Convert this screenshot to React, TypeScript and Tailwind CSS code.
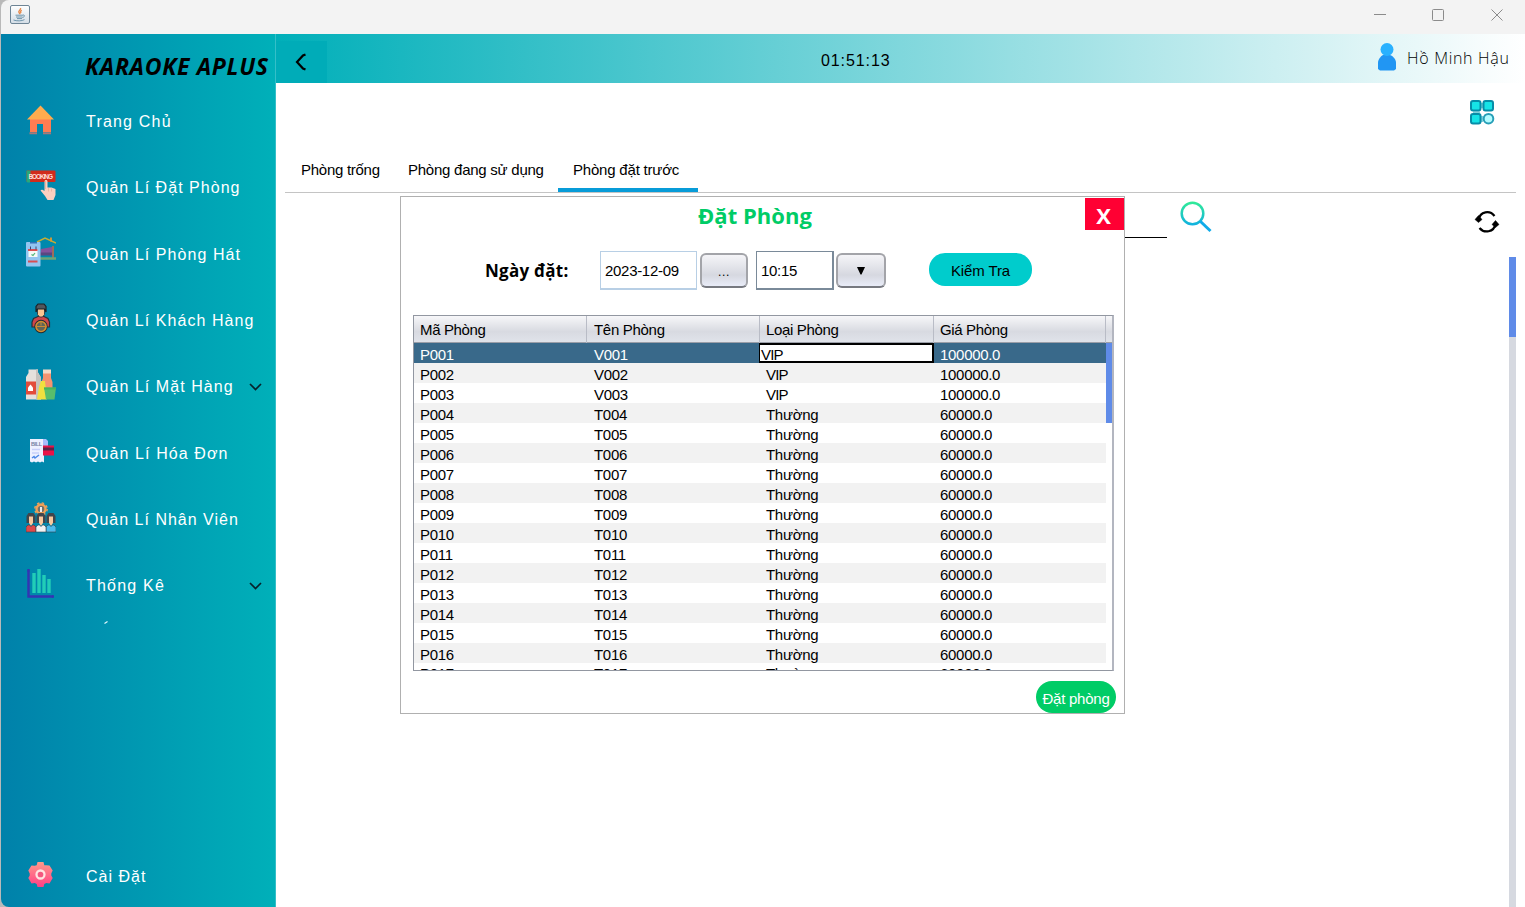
import React from "react";

const ARIAL = "font-['Liberation_Sans',Arial,sans-serif]";

function JavaIcon() {
  return (
    <svg width="20" height="20" viewBox="0 0 20 20">
      <defs>
        <linearGradient id="jv" x1="0" y1="0" x2="0" y2="1">
          <stop offset="0" stopColor="#ffffff" />
          <stop offset="1" stopColor="#d3dde6" />
        </linearGradient>
      </defs>
      <rect x="0.5" y="0.5" width="19" height="18" rx="1.5" fill="url(#jv)" stroke="#6e8596" />
      <path d="M10.500 3c1 1.600-2.500 2.600-1.600 4.200.3.800 1 1.200 1 2M11.800 5.400c-1.600.7-1.600 1.600-.7 2.600" fill="none" stroke="#e8894a" strokeWidth="1.400" />
      <path d="M5.500 10.200h7.500M6 12h6.500M7 13.600h5M13 10c2.200-.2 1.800 2-.6 2.600M3.500 15c3 1.200 8.500 1.200 11-.4" fill="none" stroke="#6f95ac" strokeWidth="1" />
    </svg>
  );
}

function HomeIcon() {
  return (
    <svg width="30" height="30" viewBox="1 0 30 30">
      <path d="M5 13h21v14h-8v-8h-6v8H5z" fill="#ff7c52" />
      <path d="M4.500 27.300H12v2H4.500zM18 27.300h8v2h-8z" fill="#a87878" />
      <path d="M15.500 0.500L29 14.500H2z" fill="#ffac4e" />
    </svg>
  );
}

function BookingIcon() {
  return (
    <svg width="30" height="31" viewBox="0 0 30 31">
      <rect x="0.500" y="0.500" width="29" height="11.500" rx="1" fill="#d12b1c" />
      <path d="M.5 0.500h4v3l-.5 9H1.500l-1-1z" fill="#28a87a" />
      <text x="2.500" y="8.600" fontSize="6.500" fontWeight="700" fill="#ffdcd6" textLength="24.500" fontFamily="Liberation Sans">BOOKING</text>
      <path d="M20 10c1 0 1.500.6 1.500 1.800v5.700h4l4 1.500v6l-2 5h-6l-2.500-4-4.500-5.500c1-1.500 2.500-.8 4 .5v-9.200c0-1.200.5-1.800 1.500-1.800z" fill="#fbcfc0" />
      <path d="M19.500 11v8M22.500 18v3.500M25.500 18.500v3" stroke="#e5a995" strokeWidth=".7" />
    </svg>
  );
}

function RoomIcon() {
  return (
    <svg width="30" height="31" viewBox="0 0 30 31">
      <path d="M15 12l11-2v8H14z" fill="#85529c" />
      <path d="M14 15.500h12V18.500H14z" fill="#594780" />
      <path d="M27 9v12" stroke="#b06a52" strokeWidth="1.800" />
      <path d="M11 5L19 1l11 5" fill="none" stroke="#c3ad37" strokeWidth="1.500" />
      <path d="M25 .5v4" stroke="#e49a2e" strokeWidth="1.800" />
      <path d="M14 21.500h16" stroke="#6da477" strokeWidth="2.500" />
      <rect x="0" y="5" width="14.500" height="24.500" rx="1" fill="#93c5f0" />
      <path d="M4 5h7v1.500H4z" fill="#3275b8" />
      <rect x="2.500" y="12" width="9" height="8" fill="#f5faf7" />
      <path d="M2 13h9.500M2 24.500h9.500" stroke="#d94e52" strokeWidth="2" />
      <path d="M4.500 9.500v3M10 9.500v3" stroke="#3c4773" />
      <path d="M5.500 17.500l1.500 1 2-2.500" stroke="#50b577" fill="none" strokeWidth="1.200" />
    </svg>
  );
}

function CustomerIcon() {
  return (
    <svg width="30" height="31" viewBox="0 0 30 31">
      <path d="M6 24v-5l1.500-3.500 4.500-2h6l4 2 1.500 3.500v5z" fill="#cf464a" stroke="#263038" strokeWidth="1.200" />
      <path d="M11.500 5.500h7v6l-2 2.500h-3l-2-2.500z" fill="#f9c591" stroke="#212b32" strokeWidth=".8" />
      <path d="M10 9V3.500l2-2.500h6l2 2.500V9l-1.500-3h-7z" fill="#52565d" stroke="#1b2025" strokeWidth="1.200" />
      <circle cx="15" cy="23.500" r="5" fill="none" stroke="#212b32" strokeWidth="3.400" />
      <circle cx="15" cy="23.500" r="5" fill="#5e6558" stroke="#d58e2f" strokeWidth="1.600" />
      <path d="M9.500 23.500h11M15 18.500v4" stroke="#c98a35" strokeWidth="1" />
    </svg>
  );
}

function GoodsIcon() {
  return (
    <svg width="30" height="31" viewBox="0 0 30 31">
      <path d="M17 4h8v5l1.500 4v8h-11v-8l1.500-4z" fill="#f69370" />
      <path d="M17 .5h8v4h-8z" fill="#f6d9c7" />
      <path d="M0 8l2.500-4V.5H12v3l3 5v22H0z" fill="#e6e0dc" />
      <path d="M10 .5h2v3l3 5v22h-5z" fill="#c7c1bd" />
      <path d="M0 12.500h10v13H0z" fill="#e34c3b" />
      <path d="M4.500 15.500l2.500 3v3.500H2v-3.500z" fill="#fff" />
      <path d="M15 12h4l2 18.500H11L13 18z" fill="#f1e03f" />
      <path d="M18 18.500h12l-1.500 12H20z" fill="#59bd6c" />
      <path d="M18 18.500h12v2H18z" fill="#48b35c" />
    </svg>
  );
}

function BillIcon() {
  return (
    <svg width="30" height="26" viewBox="0 0 30 26">
      <path d="M4 1h14v23.500l-2-1-2 1-2-1-2 1-2-1-2 1-2-1z" fill="#eef0ff" />
      <path d="M17 1h3l2 2v5h-5z" fill="#a7bdfc" />
      <text x="5" y="7.500" fontSize="5.500" fontWeight="700" fill="#78809f" fontFamily="Liberation Sans" textLength="11">BILL</text>
      <path d="M6 11.500h8M6 15h7" stroke="#c9cffa" strokeWidth="1.500" />
      <path d="M6 20l2-1.500 1 1.500 4-3" fill="none" stroke="#4d87e8" strokeWidth="1.500" />
      <rect x="17" y="7.500" width="11" height="10" fill="#e91247" />
      <path d="M17 9.500h11v3H17z" fill="#592548" />
    </svg>
  );
}

function Person({ x, hair, body }: { x: number; hair: string; body: string }) {
  return (
    <g transform={`translate(${x} 0)`}>
      <path d="M0 21v-7l2-3h5l2 3v7z" fill={hair} />
      <path d="M2.500 14.500h4v6.500l-2 3-2-3z" fill="#fac89d" />
      <path d="M-.5 30v-5l2-2h1.500l1.500 1.500L6 23h1.500l2 2v5z" fill={body} stroke="#30404b" strokeWidth=".6" />
    </g>
  );
}

function StaffIcon() {
  return (
    <svg width="30" height="31" viewBox="0 0 30 31">
      <circle cx="15" cy="7" r="4.500" fill="#6f716a" stroke="#f0a056" strokeWidth="2.400" />
      <circle cx="15" cy="7" r="6.200" fill="none" stroke="#eea05b" strokeWidth="1.400" strokeDasharray="2.430 2.440" />
      <path d="M14 5h2v5h-2z" fill="#e8edf0" />
      <Person x={0.5} hair="#41454b" body="#e04a4a" />
      <Person x={20.5} hair="#41454b" body="#4dbbed" />
      <Person x={10.5} hair="#41454b" body="#f2f2f2" />
    </svg>
  );
}

function ChartIcon() {
  return (
    <svg width="30" height="31" viewBox="0 0 30 31">
      <path d="M2.500 1v27.500H28" fill="none" stroke="#3434b3" strokeWidth="2.400" />
      <path d="M1 3h3M26.500 27v3" stroke="#3434b3" />
      <path d="M8 5v20M13 1v24M18 7v18M23 11v14" stroke="#21cdb7" strokeWidth="3.400" />
    </svg>
  );
}

function GearIcon() {
  return (
    <svg width="27" height="27" viewBox="0 0 27 27">
      <defs>
        <linearGradient id="gr" x1="0" y1="0" x2="0" y2="1">
          <stop offset="0" stopColor="#ff9a8a" />
          <stop offset="1" stopColor="#ff3f86" />
        </linearGradient>
      </defs>
      <path d="M11.500 1h6l.8 3.300h2l3.200.2 3.200 5-1.400 3v2l1.400 2.500-3.200 5.500-3.200-.5-2 1-.8 3h-6l-.8-3-2-1-3.200.5L2.300 17l1.400-2.500v-2l-1.400-3 3.200-5 3.200.2 2-.4z" fill="url(#gr)" />
      <circle cx="14.500" cy="13.500" r="4" fill="#f4577f" stroke="#ffe3e0" strokeWidth="2.300" />
    </svg>
  );
}

const Chevron = () => (
  <svg width="13" height="8" viewBox="0 0 13 8" className="mt-[2px]">
    <path d="M1 1l5.500 5.500L12 1" fill="none" stroke="#06222b" strokeWidth="1.700" />
  </svg>
);

const menu = [
  { label: "Trang Chủ", icon: <HomeIcon />, track: "tracking-[1.2px]" },
  { label: "Quản Lí Đặt Phòng", icon: <BookingIcon />, track: "tracking-[1.03px]" },
  { label: "Quản Lí Phòng Hát", icon: <RoomIcon />, track: "tracking-[1.06px]" },
  { label: "Quản Lí Khách Hàng", icon: <CustomerIcon />, track: "tracking-[1.05px]" },
  { label: "Quản Lí Mặt Hàng", icon: <GoodsIcon />, sub: true, track: "tracking-[1.06px]" },
  { label: "Quản Lí Hóa Đơn", icon: <BillIcon />, track: "tracking-[1.1px]" },
  { label: "Quản Lí Nhân Viên", icon: <StaffIcon />, track: "tracking-[1px]" },
  { label: "Thống Kê", icon: <ChartIcon />, sub: true, track: "tracking-[1.2px]" },
];

function Sidebar() {
  return (
    <aside className="flex w-[275px] shrink-0 flex-col overflow-hidden rounded-bl-lg border-r border-[#35bfc8] bg-linear-to-r/srgb from-[#0081aa] to-[#00b0b9] text-white">
      <div className="flex h-[54px] shrink-0 items-end pb-[7px] pl-[84px] font-['Open_Sans','Noto_Sans',sans-serif] text-[23px] leading-[30px] font-bold whitespace-nowrap text-black italic">
        <span className="tracking-[0.68px]">KARAOKE APLUS</span>
      </div>
      <nav className="flex flex-col">
        {menu.map((m) => (
          <div key={m.label} className="flex h-[66.3px] items-center pl-[25px]">
            <span className="-mt-[3px] flex w-[60px] shrink-0">{m.icon}</span>
            <span className={`w-[163px] pt-[2px] text-[16px] whitespace-nowrap ${m.track}`}>{m.label}</span>
            {m.sub && <Chevron />}
          </div>
        ))}
      </nav>
      <div className="ml-[102px] h-[5px] w-[10px] pt-px">
        <svg width="8" height="5" viewBox="0 0 8 5">
          <path d="M1.500 4.500L4.500 2.500" stroke="#e8fbff" strokeWidth="1.200" />
        </svg>
      </div>
      <div className="mt-auto mb-[16px] flex h-[32px] items-center pl-[25px]">
        <span className="-mt-px flex w-[60px] shrink-0">
          <GearIcon />
        </span>
        <span className="pt-[3px] text-[16px] tracking-[1px]">Cài Đặt</span>
      </div>
    </aside>
  );
}

const rooms = Array.from({ length: 17 }, (_, i) => {
  const n = String(i + 1).padStart(3, "0");
  const vip = i < 3;
  return { id: `P${n}`, name: `${vip ? "V" : "T"}${n}`, type: vip ? "VIP" : "Thường", price: vip ? "100000.0" : "60000.0" };
});

const COLS = "grid grid-cols-[173px_173px_174px_172px]";

function RoomTable() {
  return (
    <div className="mt-[25px] ml-[12px] flex h-[356px] w-[701px] flex-col overflow-hidden border border-r-2 border-[#9297a1] border-r-[#b3b6c0]">
      <div className="flex h-[27px] shrink-0 border-b border-[#9a9ea8] bg-linear-to-b from-[#f7f7f9] via-[#d8dae1] via-60% to-[#e0e3ea]">
        <div className={`${COLS} w-[692px] leading-[28px]`}>
          {["Mã Phòng", "Tên Phòng", "Loại Phòng", "Giá Phòng"].map((h, i) => (
            <div key={h} className={`border-r border-[#b9bcc6] ${i === 1 ? "pl-[7px] tracking-[-0.3px]" : "pl-[6px] tracking-[-0.35px]"}`}>
              {h}
            </div>
          ))}
        </div>
      </div>
      <div className="flex min-h-0 flex-1">
        <div className="w-[692px] overflow-hidden">
          {rooms.map((r, i) => (
            <div
              key={r.id}
              className={`${COLS} h-[20px] ${i === 16 ? "leading-[22px]" : "leading-[24px]"} ${i === 0 ? "bg-[#39698a] text-white" : i % 2 ? "bg-[#f2f2f2]" : "bg-white"}`}
            >
              <div className="pl-[6px]">{r.id}</div>
              <div className="pl-[7px]">{r.name}</div>
              {i === 0 ? (
                <div className="-ml-px h-[20px] border-2 border-l-1 border-black bg-white pl-px leading-[20px] tracking-[-0.8px] text-black">{r.type}</div>
              ) : (
                <div className={r.type === "VIP" ? "pl-[6px] tracking-[-0.8px]" : "pl-[6px]"}>{r.type}</div>
              )}
              <div className="pl-[6px]">{r.price}</div>
            </div>
          ))}
        </div>
        <div className="flex-1 bg-white">
          <div className="h-[80px] bg-[#5f8be8]" />
        </div>
      </div>
    </div>
  );
}

const metal =
  "flex h-[35px] items-center justify-center rounded-[6px] border-2 border-[#a3a4a9] border-b-[#777980] bg-linear-to-b from-[#f5f5f8] via-[#d6d8e0] via-65% to-[#e9ecf8]";

function BookingDialog() {
  return (
    <section className="absolute top-[196px] left-[400px] flex h-[518px] w-[725px] flex-col border border-[#b0b0b0] bg-white text-[15px] tracking-[-0.3px] text-black">
      <div className="flex h-[34px] shrink-0 justify-between pt-px">
        <h1 className="w-[684px] pl-[24px] text-center font-['Open_Sans','Noto_Sans',sans-serif] text-[22px] leading-[35px] font-bold tracking-[0.05px] text-[#00cc66]">
          Đặt Phòng
        </h1>
        <button className="h-[32px] w-[39px] bg-[#ff0033] pt-[2px] pr-[2px] font-['Open_Sans','Noto_Sans',sans-serif] text-[22px] leading-[30px] font-bold text-white">X</button>
      </div>
      <div className="mt-[20px] flex h-[39px] shrink-0 items-center">
        <label className="w-[199px] pl-[84px] font-['Open_Sans','Noto_Sans',sans-serif] text-[17px] font-bold tracking-[0.25px] whitespace-nowrap">Ngày đặt:</label>
        <div className="flex h-[39px] w-[97px] items-center border border-b-2 border-[#b8cfe5] pt-[2px] pl-[4px]">2023-12-09</div>
        <button className={`ml-[3px] w-[48px] text-[12px] ${metal}`}>
          <span className="pt-[3px] tracking-[0.7px]">...</span>
        </button>
        <div className="ml-[8px] flex h-[39px] w-[78px] items-center border border-r-2 border-b-2 border-[#7a8a99] pt-[2px] pl-[4px]">10:15</div>
        <button className={`ml-[2px] w-[50px] ${metal}`}>
          <svg width="8" height="9" viewBox="0 0 8 9">
            <path d="M0 1h8L4.500 8.500h-1z" fill="#000" />
          </svg>
        </button>
        <button className="-mt-[2px] ml-[43px] h-[33px] w-[103px] rounded-[16px] bg-[#00cccc] pt-[3px] tracking-[-0.1px]">Kiểm Tra</button>
      </div>
      <RoomTable />
      <div className="flex justify-end pt-[10px] pr-[8px]">
        <button className="h-[32px] w-[80px] rounded-[16px] bg-[#00cc66] pt-[4px] tracking-[-0.25px] whitespace-nowrap text-white">Đặt phòng</button>
      </div>
    </section>
  );
}

export default function App() {
  return (
    <div className={`relative flex h-[907px] w-[1525px] flex-col overflow-hidden bg-[#b9b9b9] pl-px text-black ${ARIAL}`}>
      <div className="flex h-[34px] shrink-0 items-start justify-between rounded-tl-lg bg-[#f3f3f3] pt-[5px] pr-[22px] pl-[9px]">
        <JavaIcon />
        <svg width="131" height="20" viewBox="0 0 131 20" fill="none" stroke="#8b8b8b">
          <path d="M2 9.500h12M119.500 4.500l11 11M130.500 4.500l-11 11" />
          <rect x="60.500" y="4.500" width="11" height="11" rx="1" />
        </svg>
      </div>
      <div className="flex min-h-0 flex-1">
        <Sidebar />
        <main className="flex flex-1 flex-col bg-white">
          <header className="flex h-[49px] shrink-0 items-center bg-linear-to-r/srgb from-[#00afb9] to-white">
            <div className="mt-[7px] flex h-[42px] w-[51px] items-center bg-[#00acb8] pl-[19px]">
              <svg width="12" height="18" viewBox="0 0 12 18">
                <path d="M10.500 1.500L8 2.500 2 9l6 6.500 2.500 1" fill="none" stroke="#000" strokeWidth="2.200" />
              </svg>
            </div>
            <div className="ml-[494px] w-[560px] pt-[4px] text-[16px] tracking-[0.9px]">01:51:13</div>
            <svg width="20" height="29" viewBox="0 0 20 29" className="-mt-[5px] -ml-[4px]">
              <path d="M1 21c0-4 3-7 5-8h7c3 1 6 4 6 8v6l-2 1.500H3L1 27z" fill="#2196f3" />
              <circle cx="10" cy="7.500" r="6.500" fill="#29b1ff" />
            </svg>
            <span className="-mt-[2px] ml-[10px] font-['Open_Sans','Noto_Sans',sans-serif] text-[16px] font-light tracking-[0.7px] whitespace-nowrap">Hồ Minh Hậu</span>
          </header>
          <div className="flex h-[65px] shrink-0 justify-end pt-[16px] pr-[30px]">
            <svg width="26" height="27" viewBox="0 0 26 27" strokeWidth="2" stroke="#078da8">
              <path d="M4 13.500h7M13 4v5M13 17v6" stroke="#7fd0dc" />
              <rect x="2" y="2" width="9.500" height="9.500" rx="2" fill="#16e3e6" />
              <rect x="14.500" y="2" width="9.500" height="9.500" rx="2" fill="#16e3e6" />
              <rect x="2" y="15" width="9.500" height="9.500" rx="2" fill="#16e3e6" />
              <circle cx="19.500" cy="19.700" r="4.800" fill="#b3fcff" stroke="#279fb8" />
            </svg>
          </div>
          <div className="mx-[9px] flex h-[45px] shrink-0 border-b border-[#c4c4c4] text-[15px] leading-[44px] whitespace-nowrap">
            <div className="w-[107px] pl-[16px] tracking-[-0.27px]">Phòng trống</div>
            <div className="w-[166px] pl-[16px] tracking-[-0.25px]">Phòng đang sử dụng</div>
            <div className="h-[44px] w-[140px] border-b-4 border-[#089cd8] pl-[15px] tracking-[-0.2px]">Phòng đặt trước</div>
          </div>
          <div className="flex h-[64px] shrink-0 pl-[424px]">
            <div className="h-[45px] w-[467px] border-b border-black" />
            <svg width="32" height="32" viewBox="0 0 32 32" className="mt-[8px] ml-[13px]" fill="none" strokeWidth="2.500">
              <defs>
                <linearGradient id="sg" x1="0" y1="0" x2="0" y2="32" gradientUnits="userSpaceOnUse">
                  <stop offset="0" stopColor="#32ed94" />
                  <stop offset=".9" stopColor="#0aa6ef" />
                </linearGradient>
              </defs>
              <circle cx="12.500" cy="12.500" r="10.800" stroke="url(#sg)" />
              <path d="M20 20L30.500 30" stroke="#10abe9" strokeWidth="3" />
            </svg>
            <svg width="26" height="24" viewBox="0 0 26 24" className="mt-[17px] ml-[262px]" fill="none" stroke="#000" strokeWidth="2.200">
              <path d="M4.500 10C6 1 16 0 20.500 6M21.500 14C20 22.500 10 23.500 5.500 18" />
              <path d="M1 9.500l3.500-4 3.500 4-3.500 3zM25 14.500l-3.500 3-3.500-3 3.500-4z" fill="#000" strokeWidth=".5" />
            </svg>
          </div>
          <div className="mr-[9px] ml-auto w-[7px] flex-1 bg-[#d6d9e0]">
            <div className="h-[80px] bg-[#5f8be8]" />
          </div>
        </main>
      </div>
      <BookingDialog />
    </div>
  );
}
